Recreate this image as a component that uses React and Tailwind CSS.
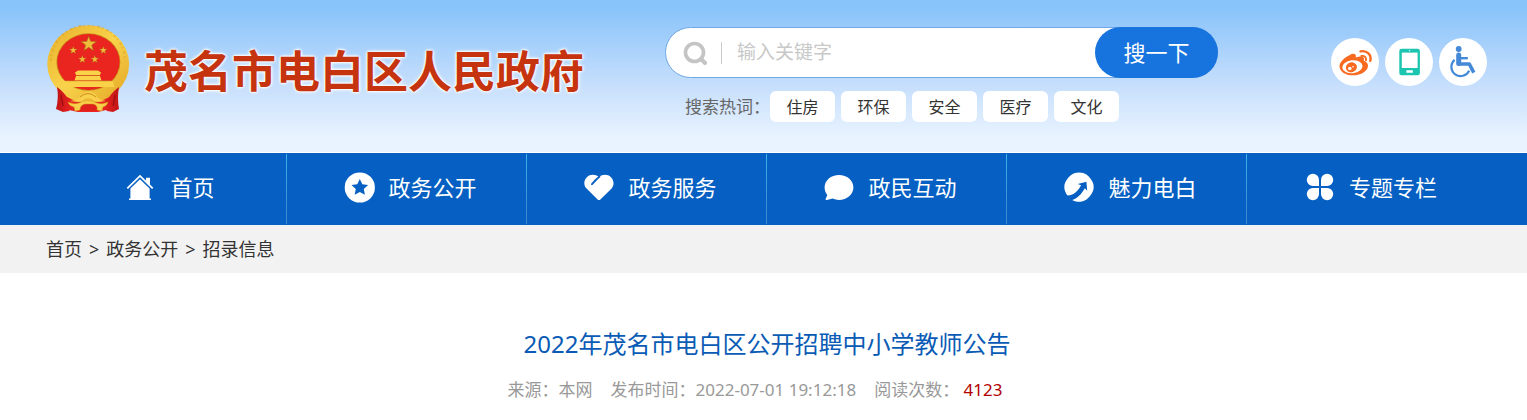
import React from "react";

const hotWords = ["住房", "环保", "安全", "医疗", "文化"];

const HomeIcon = () => (
  <svg viewBox="0 0 32 32" className="h-8 w-8 shrink-0" fill="white">
    <path d="M1.3 16.3 14 3.9l12.7 12.4" fill="none" stroke="white" strokeWidth="1.8" />
    <path d="M20 5.8h4v7.4l-4-3.9z" />
    <path d="M14 7.2l9.6 9.4v9.8H25V28H3v-1.6h1.4v-9.8z" />
  </svg>
);

const StarIcon = () => (
  <svg viewBox="0 0 32 32" className="h-8 w-8 shrink-0">
    <circle cx="15.8" cy="15.5" r="15.1" fill="white" />
    <path
      d="M15.8 7l2.5 5.3 5.8.7-4.3 4 1.1 5.8-5.1-2.8-5.1 2.8 1.1-5.8-4.3-4 5.8-.7z"
      fill="#065fc2"
    />
  </svg>
);

const HeartIcon = () => (
  <svg viewBox="0 0 32 32" className="h-8 w-8 shrink-0">
    <path
      d="M15 5.2C18.6 1.9 24 2.3 26.9 5.2c3.3 3.2 3.5 8.1.7 11.3L16.4 27.4q-1.4 1.2-2.8 0L2.3 16.3C-.6 13-.2 8.3 2.9 5.2 6 2.2 11.4 2 15 5.2z"
      fill="white"
    />
    <path d="M8 12.2l3.800-4.200q1.500-1.600 3.600-3.200" fill="none" stroke="#065fc2" strokeWidth="1.900" strokeLinecap="round" />
  </svg>
);

const ChatIcon = () => (
  <svg viewBox="0 0 32 32" className="h-8 w-8 shrink-0" fill="white">
    <path d="M15 3c8 0 14.4 5.5 14.4 12.4S23 27.9 15 27.9c-2.3 0-4.5-.5-6.4-1.3L3 28c-1.3.2-1.7-.6-1.2-1.6l1.5-3.500C1.6 20.8.6 18.2.6 15.4.6 8.5 7 3 15 3z" />
  </svg>
);

const CharmIcon = () => (
  <svg viewBox="0 0 32 32" className="h-8 w-8 shrink-0">
    <path
      d="M15 .4c6.500 0 9.300 3.300 11.600 6.300 2 2.700 3.100 5.200 3.100 8.300 0 3.400-1.300 6-3.500 8.700-2.600 3.400-5.900 6-11.200 6-5.500 0-8.700-2.500-11.400-6C1.600 21 .3 18.400.3 15c0-3.200 1.100-5.700 3.200-8.300C6 3.500 8.800.4 15 .4z"
      fill="white"
    />
    <path
      d="M2.500 23.400c6 .6 11-3.400 14.600-10.200l-3.400-1.200 8.700-2.200.8 8.900-2.300-2.500C17.400 21.900 13.500 26.600 7.500 28.200z"
      fill="#065fc2"
    />
  </svg>
);

const CloverIcon = () => (
  <svg viewBox="0 0 32 32" className="h-8 w-8 shrink-0" fill="white">
    <path d="M14 14H7.9A6.1 6.1 0 1 1 14 7.900z" />
    <path d="M16 14h6.100A6.100 6.100 0 1 0 16 7.900z" />
    <path d="M14 16H7.900A6.100 6.100 0 1 0 14 22.100z" />
    <path d="M16 16h6.100A6.100 6.100 0 1 1 16 22.100z" />
  </svg>
);

const navItems = [
  { label: "首页", Icon: HomeIcon },
  { label: "政务公开", Icon: StarIcon },
  { label: "政务服务", Icon: HeartIcon },
  { label: "政民互动", Icon: ChatIcon },
  { label: "魅力电白", Icon: CharmIcon },
  { label: "专题专栏", Icon: CloverIcon },
];

const STAR = "M0-1 .25-.34 1-.31.4.13.6.84 0 .43-.6.84-.4.13-1-.31-.25-.34z";

const Emblem = () => (
  <svg viewBox="0 0 84 88" className="h-[88px] w-[84px] shrink-0">
    <defs>
      <linearGradient id="gold" x1="0" y1="0" x2="1" y2="1">
        <stop offset="0" stopColor="#e8b02a" />
        <stop offset="0.5" stopColor="#f9d34c" />
        <stop offset="1" stopColor="#e2a322" />
      </linearGradient>
      <linearGradient id="ribbon" x1="0" y1="0" x2="1" y2="0">
        <stop offset="0" stopColor="#c01316" />
        <stop offset="0.25" stopColor="#ea2420" />
        <stop offset="0.75" stopColor="#ea2420" />
        <stop offset="1" stopColor="#c01316" />
      </linearGradient>
    </defs>
    {/* ribbon behind the wreath */}
    <path d="M14 66h55l2 18-6 2-5-1-8 2H32l-9-2-6 1-4-3z" fill="url(#ribbon)" />
    <ellipse cx="42.2" cy="39" rx="40.900" ry="38.800" fill="url(#gold)" />
    <path d="M5 36a37 36 0 0 1 74 0" fill="none" stroke="#dca024" strokeWidth="2" strokeDasharray="3 2 1.500 3" opacity="0.500" />
    <ellipse cx="42.400" cy="37" rx="32" ry="28.800" fill="#c98a18" />
    <ellipse cx="42.400" cy="37" rx="31.200" ry="28" fill="#ea241f" />
    {/* gate */}
    <path d="M32 45.500h20l3 2-1 2.500H30l-1-2.500z" fill="#fad24a" />
    <path d="M30 51h24l1.500 4.500h-27z" fill="#fad24a" />
    <path d="M18.500 56h48l2 6h-52z" fill="#fad24a" />
    <path d="M30 50.500h24M20 55.800h45" stroke="#cf7a1c" strokeWidth="0.700" />
    {/* knot and folds */}
    <path d="M11 62q7 5 11 12 5 3 8 4l-7 8-6 1-7-3q3-11 1-22zM73 62q-7 5-11 12-5 3-8 4l7 8 6 1 6-3q-2-11 0-22z" fill="url(#ribbon)" />
    <path d="M24 76q9-1 12-7 7-5 13 0 3 6 11 7l-8 1q-5-1-8-4h-4q-3 3-8 4z" fill="#f8d04b" />
    <path d="M34 72q8-7 16 0" fill="none" stroke="#c98517" strokeWidth="0.900" />
    <path d="M29 78h26l-4 8H33z" fill="#e0201c" />
    <path d="M22 77q6 3 11 1 8-5 18 0 5 2 11-1-1 4-5 5l-1 4-5-1q1-5-4-6h-8q-5 1-5 6l-5 1-1-4q-5-1-6-5z" fill="#f7cf4a" stroke="#d18e18" strokeWidth="0.500" />
    <path d="M15 70l2 11M69 70l-2 11" stroke="#9d0c10" strokeWidth="1.300" />
    <g fill="#f0bd3a" stroke="#a8641a" strokeWidth="0.080">
      <path d={STAR} transform="translate(42.700 19) scale(7.800)" />
      <path d={STAR} transform="translate(27.200 25.300) scale(3.900)" />
      <path d={STAR} transform="translate(57.300 25.300) scale(3.900)" />
      <path d={STAR} transform="translate(36.300 34.300) scale(3.900)" />
      <path d={STAR} transform="translate(48.800 34.300) scale(3.900)" />
    </g>
  </svg>
);

const WeiboIcon = () => (
  <svg viewBox="0 0 48 48" className="h-12 w-12">
    <path
      d="M18.500 17.200c2.300-1.500 5-2 6-.4.500.8.500 1.600.2 2.600 3.200-1.200 7-1.600 8 .4.500.9.300 2-.1 3 2.800.9 4.400 2.500 4.400 4.900 0 5.200-7 9.600-15 9.600S8.500 33.200 8.500 28.200c0-4 4.500-8.400 10-11z"
      fill="#f76a20"
    />
    <ellipse cx="21.400" cy="28.700" rx="10.200" ry="6.500" fill="white" transform="rotate(-6 21.400 28.700)" />
    <ellipse cx="20.400" cy="29.300" rx="5.600" ry="4.900" fill="#f76a20" transform="rotate(-15 20.400 29.300)" />
    <circle cx="18.800" cy="30.500" r="1.800" fill="white" />
    <circle cx="22" cy="28.800" r="0.800" fill="white" />
    <path d="M29.500 13.400c6.500-1.400 11.300 3.500 9.800 9.400" fill="none" stroke="#f76a20" strokeWidth="2.400" strokeLinecap="round" />
    <path d="M30.400 18c3.200-.6 5.200 1.400 4.600 4.400" fill="none" stroke="#f76a20" strokeWidth="1.900" strokeLinecap="round" />
  </svg>
);

const PhoneIcon = () => (
  <svg viewBox="0 0 48 48" className="h-12 w-12">
    <rect x="14.300" y="10.700" width="20.600" height="26.600" rx="2.200" fill="#1cc5b0" />
    <rect x="16.800" y="14.600" width="15.800" height="15.400" fill="white" />
    <rect x="21.300" y="32.200" width="6.600" height="2.600" rx="0.600" fill="white" />
    <circle cx="24.600" cy="12.600" r="0.700" fill="white" />
  </svg>
);

const AccessIcon = () => (
  <svg viewBox="0 0 48 48" className="h-12 w-12" fill="none" stroke="#4488d8">
    <circle cx="19.700" cy="11" r="2.900" fill="#4488d8" stroke="none" />
    <path d="M19.700 17v8.500" strokeWidth="5" strokeLinecap="round" />
    <path d="M20 20.200h8.800" strokeWidth="2.400" />
    <path d="M19.500 26h10.800l4.500 8.600" strokeWidth="3.600" strokeLinejoin="round" />
    <path d="M15.600 21.800a9.300 9.300 0 1 0 14.600 10.800" strokeWidth="2.200" />
  </svg>
);

const SearchBar = () => (
  <div className="w-[553px]">
    <form className="flex h-[51px] rounded-full border border-[#6fa8e2] bg-white" onSubmit={(e) => e.preventDefault()}>
      <label htmlFor="keyword" className="flex items-center pl-[17px]" aria-label="搜索">
        <svg viewBox="0 0 24 24" className="h-6 w-6" fill="none" stroke="#c4c4c4">
          <circle cx="11.500" cy="11.500" r="9" strokeWidth="3.600" />
          <path d="M18 18l4 4" strokeWidth="4" strokeLinecap="round" />
        </svg>
        <span className="ml-[14px] h-[22px] w-px bg-[#cccccc]" />
      </label>
      <input
        id="keyword"
        type="text"
        placeholder="输入关键字"
        className="min-w-0 flex-1 px-[15px] text-[19px] outline-none placeholder:text-[#c8c8c8]"
      />
      <button type="submit" className="-my-px -mr-px w-[123px] rounded-full bg-[#1774de] text-[22px] text-white">
        搜一下
      </button>
    </form>
    <div className="mt-[13px] flex items-center pl-[20px]">
      <span className="w-[85px] text-[17px] whitespace-nowrap text-[#666666]">搜索热词：</span>
      <div className="flex gap-[6px]">
        {hotWords.map((word) => (
          <a key={word} href="#" className="flex h-[31px] w-[65px] items-center justify-center rounded-md bg-white text-base text-[#333333]">
            {word}
          </a>
        ))}
      </div>
    </div>
  </div>
);

const Header = () => (
  <header className="h-[153px] border-b border-white bg-linear-to-b from-[#88c3fa] from-5% via-[#c5defc] via-55% to-[#e8f3ff] to-90%">
    <div className="flex items-start pr-10 pl-[46px]">
      <a href="#" className="mt-[25px] flex items-start">
        <Emblem />
        <span className="mt-[2px] ml-[14px] text-[44px] leading-[88px] font-bold whitespace-nowrap text-[#c6340f] [text-shadow:0_0_2px_#fff,0_0_2px_#fff,0_0_3px_#fff,0_0_4px_#fff]">
          茂名市电白区人民政府
        </span>
      </a>
      <div className="mt-[27px] ml-[81px]">
        <SearchBar />
      </div>
      <div className="mt-[38px] ml-auto flex gap-[6px]">
        <a href="#" aria-label="微博" className="h-12 w-12 rounded-full bg-white">
          <WeiboIcon />
        </a>
        <a href="#" aria-label="手机版" className="h-12 w-12 rounded-full bg-white">
          <PhoneIcon />
        </a>
        <a href="#" aria-label="无障碍" className="h-12 w-12 rounded-full bg-white">
          <AccessIcon />
        </a>
      </div>
    </div>
  </header>
);

const Nav = () => (
  <nav className="bg-[#065fc2] pr-10 pl-[47px]">
    <ul className="flex">
      {navItems.map(({ label, Icon }, i) => (
        <li key={label} className="flex h-[72px] flex-1 items-center">
          <a href="#" className="flex flex-1 items-center justify-center gap-3 pb-[2px] pl-2 text-[22px] text-white">
            <Icon />
            <span className="pb-[2px]">{label}</span>
          </a>
          {i < navItems.length - 1 && (
            <span className="h-[70px] w-px bg-linear-to-b from-[#36b4e6] to-[#3f82d0]" />
          )}
        </li>
      ))}
    </ul>
  </nav>
);

const Breadcrumb = () => (
  <div className="flex h-12 items-center gap-[7px] bg-[#f2f2f2] px-[46px] text-[18px] text-[#333333]">
    <a href="#">首页</a>
    <span>&gt;</span>
    <a href="#">政务公开</a>
    <span>&gt;</span>
    <a href="#">招录信息</a>
  </div>
);

const App = () => {
  return (
    <div className="min-h-screen bg-white font-['Noto_Sans','Noto_Sans_CJK_SC',sans-serif]">
      <Header />
      <Nav />
      <Breadcrumb />
      <main className="pt-[53px] pr-10 pl-[47px] text-center">
        <h1 className="text-[24px] leading-9 text-[#0a5bb5]">2022年茂名市电白区公开招聘中小学教师公告</h1>
        <div className="mt-4 flex justify-center gap-[18px] pr-6 text-[17px] leading-6 text-[#999999]">
          <span>来源：本网</span>
          <span>发布时间：2022-07-01 19:12:18</span>
          <span>
            阅读次数： <span className="text-[#b20000]">4123</span>
          </span>
        </div>
      </main>
    </div>
  );
};

export default App;
